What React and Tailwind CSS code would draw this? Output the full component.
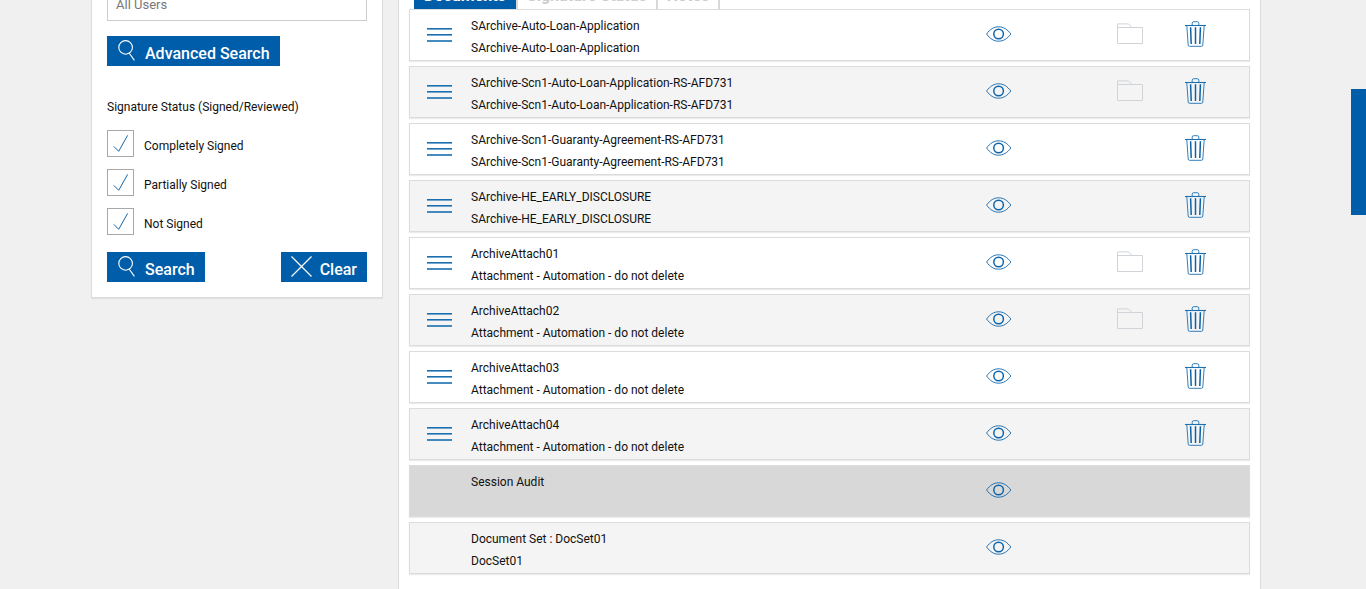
import { useState } from 'react';

const DOCUMENTS = [
  { id: 1, name: 'SArchive-Auto-Loan-Application', description: 'SArchive-Auto-Loan-Application', movable: true, folder: true },
  { id: 2, name: 'SArchive-Scn1-Auto-Loan-Application-RS-AFD731', description: 'SArchive-Scn1-Auto-Loan-Application-RS-AFD731', movable: true, folder: true },
  { id: 3, name: 'SArchive-Scn1-Guaranty-Agreement-RS-AFD731', description: 'SArchive-Scn1-Guaranty-Agreement-RS-AFD731', movable: true },
  { id: 4, name: 'SArchive-HE_EARLY_DISCLOSURE', description: 'SArchive-HE_EARLY_DISCLOSURE', movable: true },
  { id: 5, name: 'ArchiveAttach01', description: 'Attachment - Automation - do not delete', movable: true, folder: true },
  { id: 6, name: 'ArchiveAttach02', description: 'Attachment - Automation - do not delete', movable: true, folder: true },
  { id: 7, name: 'ArchiveAttach03', description: 'Attachment - Automation - do not delete', movable: true },
  { id: 8, name: 'ArchiveAttach04', description: 'Attachment - Automation - do not delete', movable: true },
  { id: 9, name: 'Session Audit', description: '', audit: true },
  { id: 10, name: 'Document Set : DocSet01', description: 'DocSet01' },
];

const STATUSES = ['Completely Signed', 'Partially Signed', 'Not Signed'];

const TABS = ['Documents', 'Signature Status', 'Notes'];

const MenuIcon = () => (
  <svg width="25" height="14" viewBox="0 0 25 14" fill="#1a6fb0">
    <rect y="0" width="25" height="1.6" />
    <rect y="6" width="25" height="1.6" />
    <rect y="12.2" width="25" height="1.6" />
  </svg>
);

const EyeIcon = () => (
  <svg width="26" height="16" viewBox="0 0 26 16" fill="none" stroke="#0f64a9">
    <path d="M.6 8C4 3.2 8 .8 12.6 .8S21.4 3.2 24.8 8C21.4 12.8 17.2 15.2 12.6 15.2S4 12.8.6 8Z" strokeWidth="0.9" />
    <circle cx="12.6" cy="8" r="4.8" strokeWidth="1.5" />
  </svg>
);

const FolderIcon = () => (
  <svg width="26" height="22" viewBox="0 0 26 22" fill="none" stroke="#d0d3d8">
    <path d="M.5 4.5H25.5V20.5H.5V.9H11.5L15 4.5" />
  </svg>
);

const TrashIcon = () => (
  <svg width="22" height="26" viewBox="0 0 22 26" fill="none" stroke="#1c70b1">
    <path d="M0 4.5H21" strokeWidth="1.1" />
    <path d="M7.2 4.3V2.2Q7.2.7 8.7.7H12.3Q13.8.7 13.8 2.2V4.3" strokeWidth="0.9" />
    <path d="M1.8 4.7L3.2 24Q3.3 25.3 4.5 25.3H16.5Q17.7 25.3 17.8 24L19.2 4.7" strokeWidth="0.9" />
    <path d="M5.6 6.3L6.2 23M10.5 6.3V23M15.4 6.3L14.8 23" stroke="#0c62a8" strokeWidth="1.5" />
  </svg>
);

const SearchIcon = () => (
  <svg width="20" height="21" viewBox="-1 0 20 21" fill="none" stroke="white" strokeWidth="1.1">
    <circle cx="7.6" cy="7.4" r="6.8" />
    <path d="M11.3 13.2L16.4 20.4" />
  </svg>
);

const CloseIcon = () => (
  <svg width="21" height="21" viewBox="0 0 21 21" stroke="white" strokeWidth="1.2">
    <path d="M.5.5L20.5 20.5M20.5.5L.5 20.5" />
  </svg>
);

const CheckIcon = () => (
  <svg className="pointer-events-none col-start-1 row-start-1" width="15" height="18" viewBox="0 0 15 18" fill="none" stroke="#1267ab" strokeWidth="1">
    <path d="M.8 11.4L5.7 16.3L14.6.4" />
  </svg>
);

const ActionButton = ({ icon, children }) => (
  <button type="button" className="flex h-[30px] items-start gap-2 bg-[#005da9] px-2.5 text-base font-medium text-white">
    <span className="pt-1">{icon}</span>
    <span className="pt-1.5 leading-6">{children}</span>
  </button>
);

const StatusCheckbox = ({ label }) => {
  const [checked, setChecked] = useState(true);

  return (
    <label className="flex items-center gap-2.5">
      <span className="grid place-items-center">
        <input
          type="checkbox"
          checked={checked}
          onChange={(e) => setChecked(e.target.checked)}
          className="col-start-1 row-start-1 size-[27px] appearance-none border border-[#a8a8a8] bg-white"
        />
        {checked && <CheckIcon />}
      </span>
      <span className="pt-1">{label}</span>
    </label>
  );
};

const SearchPanel = () => (
  <form
    onSubmit={(e) => e.preventDefault()}
    className="-mt-7 w-[292px] shrink-0 self-start border border-[#dcdcdc] bg-white px-[15px] pt-3.5 pb-[15px] shadow-[0_1px_1px_rgba(0,0,0,0.06)]"
  >
    <input
      type="text"
      aria-label="User"
      placeholder="All Users"
      className="block h-[34px] w-full border border-[#ccc] px-2 text-[13px] placeholder:text-[#777]"
    />
    <div className="mt-[15px] flex">
      <ActionButton icon={<SearchIcon />}>Advanced Search</ActionButton>
    </div>
    <fieldset className="mt-[31px]">
      <legend className="leading-5">Signature Status (Signed/Reviewed)</legend>
      <div className="mt-[13px] flex flex-col gap-3">
        {STATUSES.map((status) => (
          <StatusCheckbox key={status} label={status} />
        ))}
      </div>
    </fieldset>
    <div className="mt-[17px] flex justify-between">
      <ActionButton icon={<SearchIcon />}>Search</ActionButton>
      <ActionButton icon={<CloseIcon />}>Clear</ActionButton>
    </div>
  </form>
);

const DocumentRow = ({ doc }) => (
  <li
    className={`grid h-[52px] grid-cols-[61px_1fr_197px_66px_66px] items-center border border-[#dcdcdc] pr-5 shadow-[0_1px_1px_rgba(0,0,0,0.08)] ${
      doc.audit ? 'bg-[#d8d8d8]' : 'odd:bg-white even:bg-[#f4f4f4]'
    }`}
  >
    <div className="pl-[17px]">
      {doc.movable && (
        <button type="button" aria-label="Reorder" className="block">
          <MenuIcon />
        </button>
      )}
    </div>
    <div className="self-start pt-[5px] leading-[22px]">
      <p>{doc.name}</p>
      <p>{doc.description}</p>
    </div>
    <div className="flex justify-center pb-0.5">
      <button type="button" aria-label="View">
        <EyeIcon />
      </button>
    </div>
    <div className="flex justify-center pb-0.5">
      {doc.folder && (
        <button type="button" aria-label="Folder">
          <FolderIcon />
        </button>
      )}
    </div>
    <div className="flex justify-center pb-0.5">
      {doc.movable && (
        <button type="button" aria-label="Delete">
          <TrashIcon />
        </button>
      )}
    </div>
  </li>
);

const DocumentsPanel = () => {
  const [tab, setTab] = useState('Documents');

  return (
    <section className="-mt-10 min-w-0 flex-1 border border-[#dcdcdc] bg-white px-2.5 pt-[18px] pb-[15px]">
      <div className="flex pl-[5px]">
        {TABS.map((name) => (
          <div key={name} className="border-r-2 border-[#d8d8d8]">
            <button
              type="button"
              onClick={() => setTab(name)}
              className={`block h-[30px] pt-1 text-base font-bold ${
                name === tab ? 'bg-[#005da9] px-2.5 text-white' : 'bg-white px-[9px] text-[#ccc]'
              }`}
            >
              {name}
            </button>
          </div>
        ))}
      </div>
      <ul className="flex flex-col gap-[5px]">
        {DOCUMENTS.map((doc) => (
          <DocumentRow key={doc.id} doc={doc} />
        ))}
      </ul>
    </section>
  );
};

export default function App() {
  return (
    <div className="min-h-screen overflow-hidden bg-[#f0f0f0] pr-3.5 font-[Roboto,'Liberation_Sans',sans-serif] text-[12px] text-[#111]">
      <main className="mx-auto flex min-h-screen max-w-[1170px] gap-[15px]">
        <SearchPanel />
        <DocumentsPanel />
      </main>
      <button type="button" aria-label="Open side panel" className="fixed top-[89px] right-0 h-[126px] w-[15px] bg-[#005da9]" />
    </div>
  );
}
